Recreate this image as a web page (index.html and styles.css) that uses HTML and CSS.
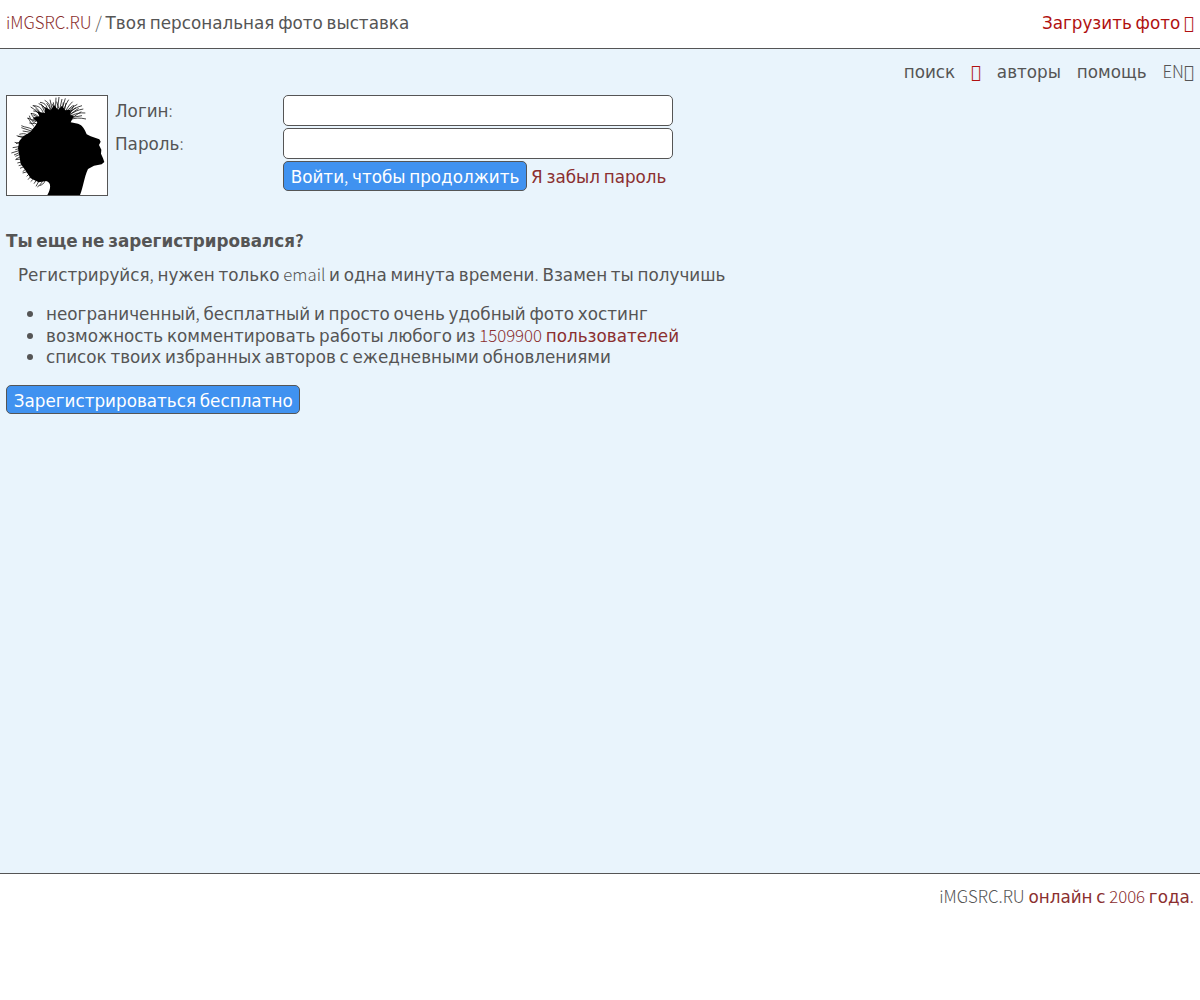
FILE: index.html
```html
<!DOCTYPE html>
<html lang="ru">
<head>
    <meta charset="UTF-8">
    <meta name="viewport" content="width=device-width, initial-scale=1.0">
    <title>iMGSRC.RU</title>
    <link rel="stylesheet" href="styles.css">
</head>
<body>
    <header class="top">
        <div><a class="lat" href="/">iMGSRC.RU</a> <span class="lat">/</span> Твоя персональная фото выставка</div>
        <a class="upload" href="/upload">Загрузить фото &#xf093;</a>
    </header>
    <main class="content">
        <nav class="menu">
            <a href="/search">поиск</a>
            <a class="hot" href="/hot">&#xf093;</a>
            <a href="/authors">авторы</a>
            <a href="/help">помощь</a>
            <a href="/en"><span class="lat">EN</span>&#xf0ac;</a>
        </nav>
        <form class="login">
            <svg class="avatar" viewBox="21 33 300 297">
                <path d="M142 330 C152 314 156 292 138 288 L116 292 L92 280 L76 256 L62 236 L58 212 L54 190 L58 168 L70 154 L90 142 L106 122 L112 112 L98 98 L118 94 L112 80 L134 84 L136 66 L152 76 L162 60 L174 74 L186 62 L196 76 L212 74 L210 90 L222 92 L212 112 L234 116 C248 121 254 132 260 148 L272 154 L298 163 L302 170 L297 180 L304 194 L303 206 L309 220 L313 231 L305 238 L282 242 L264 252 C252 278 250 306 240 330 Z"/>
                <g class="hair">
                    <path d="M122 90 C112 84 104 72 92 66 M120 84 C114 72 108 66 100 62 M130 84 C124 68 116 62 98 62 M138 84 C136 70 130 60 116 56 M142 84 C144 66 138 54 120 52 M150 78 C152 62 148 54 134 46 M158 80 L150 44 M166 76 L168 38 M172 78 L177 36 M178 78 L186 42 M184 80 L196 40 M190 80 C194 64 200 54 206 44 M196 82 C202 66 210 58 218 50 M202 84 C210 70 222 64 232 58 M206 88 C216 74 230 66 246 62 M208 92 C220 80 236 74 250 72 M210 94 C224 86 240 82 256 84 M212 98 L246 92 M210 104 C226 98 240 98 258 102 M208 90 L222 60 M186 78 L190 52 M164 76 L160 52 M128 90 C118 84 110 78 100 78 M116 96 C108 88 98 84 92 86 M114 104 C102 102 96 94 94 84 M214 102 C224 92 232 88 244 80"/>
                    <path d="M126 88 L106 72 M134 80 L124 58 M146 80 L128 62 M154 76 L140 54 M162 70 L156 56 M176 70 L170 50 M194 74 L198 54 M200 78 L218 62 M206 82 L228 68 M210 88 L236 70 M120 100 L100 90 M116 106 L98 104"/>
                    <path d="M110 118 C98 110 90 104 88 92 M108 110 C98 106 90 100 82 100 M102 124 C94 118 90 108 84 98 M98 134 C86 126 76 128 64 122 M94 138 L64 128 M92 142 L68 138 M84 150 C74 144 66 146 58 148 M78 154 L54 154 M74 160 L50 152 M66 168 L48 176 M62 176 L44 172 M62 184 L38 188 M60 190 L46 194 M60 196 L34 204 M60 202 L42 210 M60 208 L46 214 M60 216 L48 222 M64 222 L46 224 M68 230 L52 234 M70 238 L56 242 M74 244 L60 250 M78 252 L68 260 M82 260 L68 264 M88 266 L80 274 M94 272 L84 284 M102 280 L92 290 M110 284 L102 296 M118 286 L108 304 M128 286 C124 296 120 300 112 306 M136 286 C132 296 126 300 118 302 M104 116 L88 114"/>
                </g>
            </svg>
            <div class="fields">
                <label for="login">Логин<span class="lat">:</span></label>
                <input type="text" id="login" name="login">
                <label for="pass">Пароль<span class="lat">:</span></label>
                <input type="password" id="pass" name="pass">
                <div class="actions">
                    <button class="btn" type="submit">Войти<span class="lat">,</span> чтобы продолжить</button>
                    <a href="/remind">Я забыл пароль</a>
                </div>
            </div>
        </form>
        <h3>Ты еще не зарегистрировался<span class="lat">?</span></h3>
        <p>Регистрируйся<span class="lat">,</span> нужен только <span class="lat">email</span> и одна минута времени<span class="lat">.</span> Взамен ты получишь</p>
        <ul>
            <li>неограниченный<span class="lat">,</span> бесплатный и просто очень удобный фото хостинг</li>
            <li>возможность комментировать работы любого из <a href="/users"><span class="lat">1509900</span> пользователей</a></li>
            <li>список твоих избранных авторов с ежедневными обновлениями</li>
        </ul>
        <button class="btn signup" type="button">Зарегистрироваться бесплатно</button>
    </main>
    <footer>
        <span class="lat">iMGSRC.RU</span> <a href="/about">онлайн с <span class="lat">2006</span> года<span class="lat">.</span></a>
    </footer>
</body>
</html>
```
FILE: styles.css
```css
* {
    box-sizing: border-box;
}
body {
    margin: 0;
    background-color: #fff;
    color: #555;
    font-family: "DejaVu Sans", sans-serif;
    font-size: 16.8px;
    line-height: 21.6px;
    word-spacing: -1.63px;
}
a {
    color: #8b2f2f;
    text-decoration: none;
}
.lat {
    font-family: "Noto Sans CJK SC", sans-serif;
    font-weight: 300;
    line-height: 1;
}
h3 .lat {
    font-weight: 700;
}
.top {
    display: flex;
    justify-content: space-between;
    align-items: center;
    height: 49px;
    padding: 0 6px 1px;
    border-bottom: 1px solid #555;
}
.upload, .menu .hot {
    color: #b01010;
}
.content {
    height: 825px;
    padding: 13px 6px 0;
    background-color: #e9f4fc;
    border-bottom: 1px solid #555;
}
.menu {
    display: flex;
    justify-content: flex-end;
    gap: 15.8px;
    height: 33px;
}
.menu a {
    color: #555;
}
.login {
    display: flex;
    gap: 7px;
}
.avatar {
    width: 102px;
    height: 101px;
    border: 1px solid #555;
    background-color: #fff;
}
.hair {
    fill: none;
    stroke: #000;
    stroke-width: 2.2;
}
.fields {
    display: grid;
    grid-template-columns: 168px 390px;
    grid-template-rows: 31px 31px 30px;
    row-gap: 2px;
    align-items: center;
}
.fields label {
    padding-top: 2px;
}
.fields input {
    width: 100%;
    height: 31px;
    border: 1px solid #555;
    border-radius: 5px;
    background-color: #fff;
}
.actions {
    grid-column: 2;
    display: flex;
    align-items: center;
    gap: 4px;
    white-space: nowrap;
}
.actions a {
    padding-top: 3px;
}
.btn {
    height: 30px;
    padding: 4px 6.7px 0;
    border: 1px solid #555;
    border-radius: 5px;
    background-color: #4092f0;
    color: #fff;
    font: inherit;
    word-spacing: inherit;
}
.signup {
    display: block;
    height: 29px;
}
h3 {
    margin: 35px 0 12px;
    font-size: 16.8px;
    word-spacing: -2.1px;
}
p {
    margin: 0 12px 17px;
}
ul {
    margin: 0 0 17.5px;
    padding-left: 40px;
    line-height: 20.6px;
}
li::marker {
    font-family: "Noto Sans CJK SC", sans-serif;
}
footer {
    padding: 13px 6px;
    text-align: right;
}
```
